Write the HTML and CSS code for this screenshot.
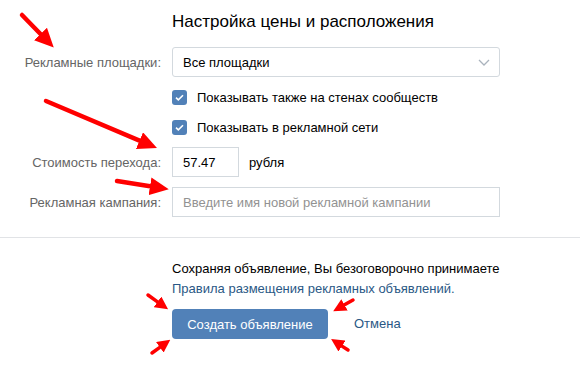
FILE: index.html
```html
<!DOCTYPE html>
<html>
<head>
    <meta charset="utf-8">
    <link rel="stylesheet" href="styles.css">
</head>
<body>
    <div class="page">
        <div class="settings">
            <div class="title">Настройка цены и расположения</div>

            <div class="row">
                <div class="label">Рекламные площадки:</div>
                <div class="select">
                    <span>Все площадки</span>
                    <svg class="chevron" width="12" height="7" viewBox="0 0 12 7">
                        <path d="M1 1 L6 6 L11 1" fill="none" stroke="#aab3bd" stroke-width="1.3"/>
                    </svg>
                </div>
            </div>

            <div class="row row-check first-check">
                <div class="label"></div>
                <label class="check">
                    <span class="box">
                        <svg width="15" height="15" viewBox="0 0 15 15">
                            <path d="M4 7.6 L6.3 9.9 L11 5.2" fill="none" stroke="#fff" stroke-width="1.6"/>
                        </svg>
                    </span>
                    Показывать также на стенах сообществ
                </label>
            </div>

            <div class="row row-check">
                <div class="label"></div>
                <label class="check">
                    <span class="box">
                        <svg width="15" height="15" viewBox="0 0 15 15">
                            <path d="M4 7.6 L6.3 9.9 L11 5.2" fill="none" stroke="#fff" stroke-width="1.6"/>
                        </svg>
                    </span>
                    Показывать в рекламной сети
                </label>
            </div>

            <div class="row row-cost">
                <div class="label">Стоимость перехода:</div>
                <div class="input input-cost">57.47</div>
                <span class="unit">рубля</span>
            </div>

            <div class="row row-campaign">
                <div class="label">Рекламная кампания:</div>
                <div class="input input-wide placeholder">Введите имя новой рекламной кампании</div>
            </div>
        </div>

        <div class="footer">
            <div class="terms">Сохраняя объявление, Вы безоговорочно принимаете</div>
            <a class="link" href="#">Правила размещения рекламных объявлений.</a>
            <div class="actions">
                <button class="btn">Создать объявление</button>
                <a class="cancel" href="#">Отмена</a>
            </div>
        </div>
    </div>

    <!-- red annotation arrows drawn over the screenshot -->
    <svg class="arrows" width="580" height="368" viewBox="0 0 580 368">
        <defs>
            <marker id="big" markerUnits="userSpaceOnUse" markerWidth="19" markerHeight="18" refX="0" refY="9" orient="auto">
                <path d="M0 0 L19 9 L0 18 z" fill="#ff0000"/>
            </marker>
            <marker id="small" markerUnits="userSpaceOnUse" markerWidth="13" markerHeight="13" refX="0" refY="6.5" orient="auto">
                <path d="M0 0 L13 6.5 L0 13 z" fill="#ff0000"/>
            </marker>
        </defs>
        <g stroke="#ff0000" stroke-linecap="round">
            <line x1="22" y1="15" x2="40.5" y2="34" stroke-width="4.5" marker-end="url(#big)"/>
            <line x1="46" y1="101" x2="139.5" y2="140.6" stroke-width="4.5" marker-end="url(#big)"/>
            <line x1="117" y1="181" x2="150" y2="186.3" stroke-width="4.5" marker-end="url(#big)"/>
            <line x1="148" y1="295" x2="157.5" y2="301.8" stroke-width="3.5" marker-end="url(#small)"/>
            <line x1="152" y1="353" x2="159.8" y2="347.3" stroke-width="3.5" marker-end="url(#small)"/>
            <line x1="353" y1="300" x2="344.5" y2="304.8" stroke-width="3.5" marker-end="url(#small)"/>
            <line x1="348" y1="350" x2="342" y2="346.1" stroke-width="3.5" marker-end="url(#small)"/>
        </g>
    </svg>
</body>
</html>
```

FILE: styles.css
```css
body {
    margin: 0;
    background: #fff;
    font-family: "Liberation Sans", Arial, sans-serif;
    font-size: 13px;
    color: #000;
}

.page {
    position: relative;
    width: 580px;
    height: 368px;
    overflow: hidden;
}

.settings {
    padding-top: 12px;
    padding-bottom: 20px;
    border-bottom: 1px solid #e1e3e6;
}

.title {
    margin-left: 172px;
    font-size: 17px;
    line-height: 20px;
    color: #000;
}

.row {
    display: flex;
    align-items: center;
    height: 30px;
    margin-top: 15px;
}

.label {
    width: 161px;
    margin-right: 11px;
    flex-shrink: 0;
    text-align: right;
    color: #656565;
}

.select {
    width: 328px;
    height: 30px;
    box-sizing: border-box;
    border: 1px solid #d3d9de;
    border-radius: 3px;
    padding: 0 9px 0 10px;
    display: flex;
    align-items: center;
    justify-content: space-between;
}

.chevron {
    margin-top: 1px;
}

.row-check {
    margin-top: 0;
}

.first-check {
    margin-top: 5px;
}

.check {
    display: flex;
    align-items: center;
    gap: 10px;
}

.box {
    width: 15px;
    height: 15px;
    border-radius: 3px;
    background: #5181b8;
    display: block;
}

.box svg {
    display: block;
}

.row-cost {
    margin-top: 5px;
}

.row-campaign {
    margin-top: 10px;
}

.input {
    height: 30px;
    box-sizing: border-box;
    border: 1px solid #d3d9de;
    padding: 0 10px;
    display: flex;
    align-items: center;
}

.input-cost {
    width: 67px;
}

.unit {
    margin-left: 10px;
}

.input-wide {
    width: 328px;
}

.placeholder {
    color: #929292;
}

.footer {
    padding: 21px 0 0 172px;
    line-height: 20px;
}

.link {
    color: #2a5885;
    text-decoration: none;
}

.actions {
    display: flex;
    align-items: center;
    margin-top: 10px;
}

.btn {
    width: 156px;
    height: 30px;
    border: none;
    border-radius: 4px;
    background: #5181b8;
    color: #fff;
    font-family: inherit;
    font-size: 13px;
    padding: 0;
}

.cancel {
    margin-left: 26px;
    color: #2a5885;
    text-decoration: none;
}

.arrows {
    position: absolute;
    left: 0;
    top: 0;
    pointer-events: none;
}
```
